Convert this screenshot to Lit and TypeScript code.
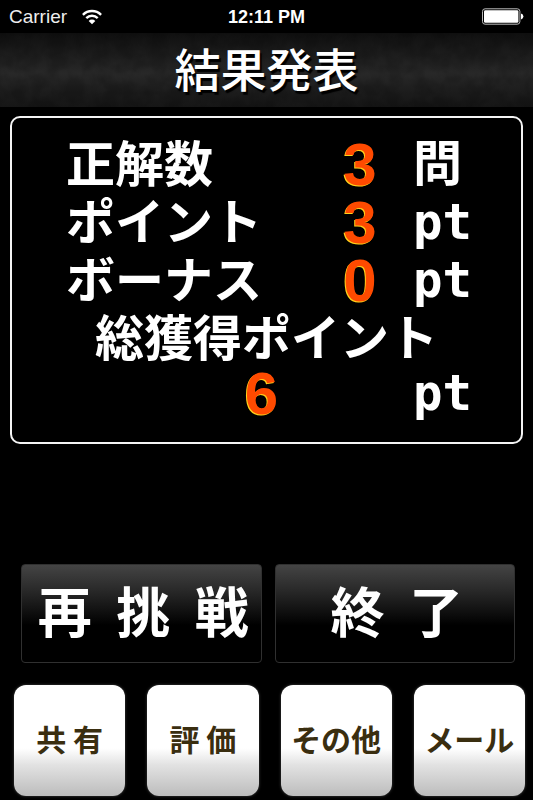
import { LitElement, html, css } from "lit";
import { customElement } from "lit/decorators.js";

interface Score {
  label: string;
  value: number;
  unit: string;
  total?: boolean;
}

const SCORES: Score[] = [
  { label: "正解数", value: 3, unit: "問" },
  { label: "ポイント", value: 3, unit: "pt" },
  { label: "ボーナス", value: 0, unit: "pt" },
  { label: "総獲得ポイント", value: 6, unit: "pt", total: true },
];

@customElement("status-bar")
export class StatusBar extends LitElement {
  static styles = css`
    :host {
      display: grid;
      grid-template-columns: 1fr auto 1fr;
      align-items: center;
      height: 33px;
      padding: 0 9px;
      box-sizing: border-box;
      font: 19px/24px "Liberation Sans", sans-serif;
      color: #fff;
    }
    .left {
      display: flex;
      align-items: center;
      gap: 15px;
      color: #eee;
    }
    .time {
      font-weight: bold;
      font-size: 18px;
    }
    .battery {
      justify-self: end;
    }
    svg {
      display: block;
    }
  `;

  render() {
    return html`
      <div class="left">
        <span>Carrier</span>
        <svg width="20" height="16" viewBox="0 0 20 16" fill="none" stroke="#fff" stroke-width="2.4" aria-hidden="true">
          <path d="M0.9 5.8A12.8 12.8 0 0 1 19.1 5.8" />
          <path d="M4.3 9.2A8 8 0 0 1 15.7 9.2" />
          <path d="M10 15.2L6.7 11.9A4.7 4.7 0 0 1 13.3 11.9Z" fill="#fff" stroke="none" />
        </svg>
      </div>
      <div class="time">12:11 PM</div>
      <svg class="battery" width="42" height="17" viewBox="0 0 42 17" aria-hidden="true">
        <rect x="0.5" y="0.8" width="37.4" height="15.4" rx="2.6" fill="none" stroke="#bbb" stroke-width="1" />
        <rect x="2" y="2.2" width="34.4" height="12.6" rx="1.4" fill="#fff" />
        <path d="M39 5.6Q41.4 6.2 41.4 8.5T39 11.4Z" fill="#fff" />
      </svg>
    `;
  }
}

@customElement("score-panel")
export class ScorePanel extends LitElement {
  static styles = css`
    :host {
      display: block;
      border: 2px solid #f4f4f4;
      border-radius: 10px;
      padding: 18px 0 22px;
      font: bold 49px/58px "Liberation Sans", "Noto Sans CJK JP", sans-serif;
      color: #fff;
    }
    dl,
    dt,
    dd {
      margin: 0;
    }
    .row {
      display: grid;
      grid-template-columns: minmax(0, 1fr) 54px 108px;
      column-gap: 26px;
      padding-left: 54px;
    }
    .label,
    .unit {
      white-space: nowrap;
    }
    .unit {
      font-family: "DejaVu Sans Mono", "Noto Sans CJK JP", monospace;
    }
    .value {
      font-size: 60px;
      color: #ff4a00;
      text-shadow: -1px 1px 0 #ffd21a;
      text-align: center;
    }
    .total {
      padding-left: 0;
    }
    .total .label {
      grid-column: 1 / -1;
      text-align: center;
    }
    .total .value,
    .total .unit {
      line-height: 52px;
    }
    .total .value {
      grid-area: 2 / 1 / 3 / -1;
      justify-self: center;
      padding-right: 10px;
    }
    .total .unit {
      grid-area: 2 / 3;
    }
  `;

  render() {
    return html`
      <dl>
        ${SCORES.map(
          (s) => html`
            <div class="row ${s.total ? "total" : ""}">
              <dt class="label">${s.label}</dt>
              <dd class="value">${s.value}</dd>
              <dd class="unit">${s.unit}</dd>
            </div>
          `
        )}
      </dl>
    `;
  }
}

@customElement("app-root")
export class AppRoot extends LitElement {
  static styles = css`
    :host {
      display: flex;
      flex-direction: column;
      min-height: 100vh;
      background: #000;
      font-family: "Noto Sans CJK JP", sans-serif;
      overflow: hidden;
    }
    .header {
      position: relative;
      height: 74px;
      background: linear-gradient(#101010, #1b1b1b 25%, #282828 55%, #1c1c1c 80%, #161616);
    }
    .texture {
      position: absolute;
      inset: 0;
      width: 100%;
      height: 100%;
      opacity: 0.14;
    }
    h1 {
      position: relative;
      margin: 0;
      font-family: "Liberation Sans", "Noto Sans CJK JP", sans-serif;
      font-size: 46px;
      line-height: 76px;
      font-weight: 500;
      text-align: center;
      color: #fff;
      text-shadow: 2px 3px 1px #000;
    }
    score-panel {
      margin: 9px 10px 0;
    }
    .main-actions {
      display: grid;
      grid-template-columns: 1fr 1fr;
      gap: 13px;
      margin-top: 120px;
      padding: 0 18px 0 21px;
    }
    button {
      margin: 0;
      padding: 0 0 6px;
      font-family: inherit;
      font-weight: bold;
      white-space: pre;
      cursor: pointer;
    }
    .main {
      height: 99px;
      padding: 0 0 8px 4px;
      border: 1px solid #303030;
      border-radius: 4px;
      background: linear-gradient(#444, #2a2a2a 25%, #000 62%);
      color: #fff;
      font-size: 54px;
      line-height: 72px;
    }
    .links {
      display: grid;
      grid-template-columns: repeat(4, 1fr);
      gap: 22px;
      margin-top: 22px;
      padding: 0 8px 4px 14px;
    }
    .link {
      aspect-ratio: 1;
      border: 0;
      border-radius: 12px;
      background: linear-gradient(#fff 57%, #e2e2e2 72%, #bcbcbc);
      box-shadow: 0 0 3px #444;
      color: #3a2e10;
      font-size: 30px;
      line-height: 40px;
    }
  `;

  render() {
    return html`
      <status-bar></status-bar>
      <header class="header">
        <svg class="texture" aria-hidden="true">
          <filter id="leather">
            <feTurbulence type="fractalNoise" baseFrequency="0.06" numOctaves="3" seed="4" />
            <feColorMatrix values="0 0 0 0 0  0 0 0 0 0  0 0 0 0 0  3 0 0 0 -1" />
          </filter>
          <rect width="100%" height="100%" filter="url(#leather)" />
        </svg>
        <h1>結果発表</h1>
      </header>
      <score-panel></score-panel>
      <div class="main-actions">
        <button class="main" type="button">再  挑  戦</button>
        <button class="main" type="button">終  了</button>
      </div>
      <nav class="links">
        <button class="link" type="button">共 有</button>
        <button class="link" type="button">評 価</button>
        <button class="link" type="button">その他</button>
        <button class="link" type="button">メール</button>
      </nav>
    `;
  }
}
